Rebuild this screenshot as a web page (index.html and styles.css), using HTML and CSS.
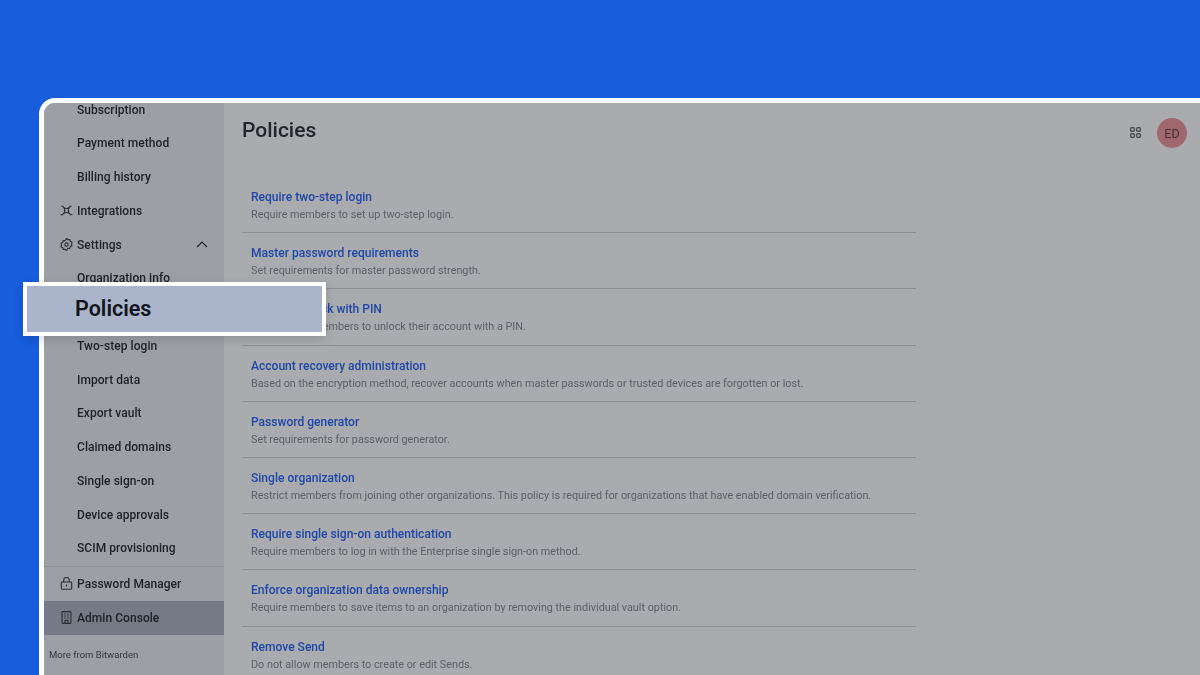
FILE: index.html
```html
<!DOCTYPE html>
<html lang="en">
<head>
    <meta charset="UTF-8">
    <meta name="viewport" content="width=device-width, initial-scale=1.0">
    <title>Policies</title>
    <link rel="stylesheet" href="styles.css">
</head>
<body>
    <div class="frame">
        <aside class="sidebar">
            <nav class="nav-scroll">
                <div class="nav-list">
                    <a class="nav-row sub">Subscription</a>
                    <a class="nav-row sub">Payment method</a>
                    <a class="nav-row sub">Billing history</a>
                    <a class="nav-row">
                        <svg class="nav-icon" viewBox="0 0 14 14" fill="none" stroke="currentColor" stroke-width="1.2">
                            <path d="M4.6 4.4q2.4 1 4.8 0q-1 2.6 0 5.2q-2.4-1-4.8 0q1-2.6 0-5.2z"/>
                            <path d="M4.6 4.4 2.8 2.4M9.4 4.4l1.8-2M4.6 9.6l-2.2 2M9.4 9.6l2.2 2M1.6 2.4h2.2M10.2 2.4h2.2M.6 11.6h2.8M10.6 11.6h2.8"/>
                        </svg>
                        Integrations
                    </a>
                    <a class="nav-row">
                        <svg class="nav-icon" viewBox="0 0 14 14" fill="none" stroke="currentColor" stroke-width="1.2">
                            <path d="M7 .5l1.5 1.3 2-.1.6 1.9 1.8 1-.5 1.9.5 1.9-1.8 1-.6 1.9-2-.1L7 13.5l-1.5-1.3-2 .1-.6-1.9-1.8-1 .5-1.9-.5-1.9 1.8-1 .6-1.9 2 .1z"/>
                            <circle cx="7" cy="7" r="1.8"/>
                        </svg>
                        Settings
                        <svg class="chevron" viewBox="0 0 12 7" fill="none" stroke="currentColor" stroke-width="1.1">
                            <path d="M1 6 6 1l5 5"/>
                        </svg>
                    </a>
                    <a class="nav-row sub">Organization info</a>
                    <a class="nav-row sub">Policies</a>
                    <a class="nav-row sub">Two-step login</a>
                    <a class="nav-row sub">Import data</a>
                    <a class="nav-row sub">Export vault</a>
                    <a class="nav-row sub">Claimed domains</a>
                    <a class="nav-row sub">Single sign-on</a>
                    <a class="nav-row sub">Device approvals</a>
                    <a class="nav-row sub">SCIM provisioning</a>
                </div>
            </nav>
            <div class="switcher">
                <a class="nav-row">
                    <svg class="nav-icon" viewBox="0 0 14 14" fill="none" stroke="currentColor" stroke-width="1.2">
                        <rect x="1.4" y="5.4" width="11.2" height="7.8" rx="1"/>
                        <path d="M4 5.4V3.6a3 3 0 0 1 6 0v1.8"/>
                        <path d="M7 8.2v2"/>
                    </svg>
                    Password Manager
                </a>
                <a class="nav-row active">
                    <svg class="nav-icon" viewBox="0 0 14 14" fill="none" stroke="currentColor" stroke-width="1.2">
                        <rect x="2.2" y=".7" width="9.6" height="12.6" rx=".8"/>
                        <path d="M4.6 3.2h1.6M7.8 3.2h1.6M4.6 5.4h1.6M7.8 5.4h1.6M4.6 7.6h1.6M7.8 7.6h1.6"/>
                        <path d="M5.4 13.3v-3h3.2v3"/>
                    </svg>
                    Admin Console
                </a>
            </div>
            <div class="more-from">More from Bitwarden</div>
        </aside>

        <main class="main">
            <header class="page-header">
                <h1>Policies</h1>
                <div class="header-tools">
                    <svg class="apps-icon" viewBox="0 0 12 12" fill="none" stroke="currentColor" stroke-width="1.1">
                        <rect x=".8" y=".8" width="3.8" height="3.8" rx=".6"/>
                        <rect x="7.4" y=".8" width="3.8" height="3.8" rx=".6"/>
                        <rect x=".8" y="7.4" width="3.8" height="3.8" rx=".6"/>
                        <rect x="7.4" y="7.4" width="3.8" height="3.8" rx=".6"/>
                    </svg>
                    <div class="avatar">ED</div>
                </div>
            </header>

            <div class="policy-list">
                <div class="policy">
                    <a class="policy-name">Require two-step login</a>
                    <p>Require members to set up two-step login.</p>
                </div>
                <div class="policy">
                    <a class="policy-name">Master password requirements</a>
                    <p>Set requirements for master password strength.</p>
                </div>
                <div class="policy">
                    <a class="policy-name">Remove unlock with PIN</a>
                    <p>Do not allow members to unlock their account with a PIN.</p>
                </div>
                <div class="policy">
                    <a class="policy-name">Account recovery administration</a>
                    <p>Based on the encryption method, recover accounts when master passwords or trusted devices are forgotten or lost.</p>
                </div>
                <div class="policy">
                    <a class="policy-name">Password generator</a>
                    <p>Set requirements for password generator.</p>
                </div>
                <div class="policy">
                    <a class="policy-name">Single organization</a>
                    <p>Restrict members from joining other organizations. This policy is required for organizations that have enabled domain verification.</p>
                </div>
                <div class="policy">
                    <a class="policy-name">Require single sign-on authentication</a>
                    <p>Require members to log in with the Enterprise single sign-on method.</p>
                </div>
                <div class="policy">
                    <a class="policy-name">Enforce organization data ownership</a>
                    <p>Require members to save items to an organization by removing the individual vault option.</p>
                </div>
                <div class="policy">
                    <a class="policy-name">Remove Send</a>
                    <p>Do not allow members to create or edit Sends.</p>
                </div>
            </div>
        </main>
    </div>

    <div class="callout">Policies</div>
</body>
</html>
```

FILE: styles.css
```css
html, body {
    height: 100%;
}

body {
    margin: 0;
    padding: 98px 0 0 39px;
    box-sizing: border-box;
    overflow: hidden;
    background-color: #175ddc;
    font-family: Roboto, "Liberation Sans", sans-serif;
}

.frame {
    display: flex;
    height: 100%;
    border: 5px solid #fff;
    border-width: 5px 0 0 5px;
    border-top-left-radius: 16px;
    background-color: #a9abaf;
    overflow: hidden;
    filter: blur(0.3px);
}

/* sidebar */

.sidebar {
    display: flex;
    flex-direction: column;
    flex: 0 0 180px;
    background-color: #9d9fa4;
    color: #1e2025;
}

.nav-scroll {
    height: 463px;
    overflow: hidden;
}

.nav-list {
    margin-top: -10.2px;
}

.nav-row {
    display: flex;
    align-items: center;
    gap: 4px;
    height: 33.75px;
    padding-left: 16px;
    font-size: 12px;
    font-weight: 500;
    letter-spacing: 0.05px;
}

.nav-row.sub {
    padding-left: 33px;
}

.nav-row.active {
    background-color: #757a87;
}

.nav-icon {
    flex: 0 0 13px;
    width: 13px;
    height: 13px;
    color: #2b2e35;
}

.chevron {
    width: 12px;
    height: 7px;
    margin-left: auto;
    margin-right: 16px;
}

.switcher {
    border-top: 1px solid #8b8d93;
}

.more-from {
    margin-top: 14px;
    padding-left: 5px;
    font-size: 9.5px;
    color: #34373d;
}

/* main */

.main {
    flex: 1;
    padding: 0 13px 0 18px;
}

.page-header {
    display: flex;
    justify-content: space-between;
    height: 74px;
}

.page-header h1 {
    margin: 13px 0 0;
    font-size: 21px;
    font-weight: 500;
    line-height: 28px;
    color: #22252b;
}

.header-tools {
    display: flex;
    align-items: center;
    gap: 16px;
    height: 30px;
    margin-top: 15px;
}

.apps-icon {
    width: 11px;
    height: 11px;
    margin-bottom: 2px;
    color: #2b2e35;
}

.avatar {
    display: flex;
    align-items: center;
    justify-content: center;
    width: 30px;
    height: 30px;
    border-radius: 50%;
    background-color: #a0686e;
    font-size: 12.5px;
    color: #443237;
}

.policy-list {
    width: 674px;
}

.policy {
    display: flex;
    flex-direction: column;
    justify-content: center;
    box-sizing: border-box;
    height: 56.2px;
    padding: 3px 9px 0;
    border-bottom: 1px solid #8e9097;
}

.policy:last-child {
    border-bottom: none;
}

.policy-name {
    font-size: 12.05px;
    font-weight: 500;
    line-height: 17px;
    color: #2047a8;
}

.policy p {
    margin: 0;
    font-size: 10.8px;
    line-height: 17px;
    color: #5c606b;
}

/* highlighted nav item, sits over the page */

.callout {
    position: absolute;
    left: 23px;
    top: 282px;
    width: 303px;
    height: 54px;
    padding-left: 48px;
    border: 4px solid #fff;
    box-sizing: border-box;
    background-color: #aab4ca;
    box-shadow: 0 3px 10px rgba(0, 0, 0, 0.15);
    font-size: 21.5px;
    font-weight: 600;
    line-height: 46px;
    color: #11141c;
}
```
